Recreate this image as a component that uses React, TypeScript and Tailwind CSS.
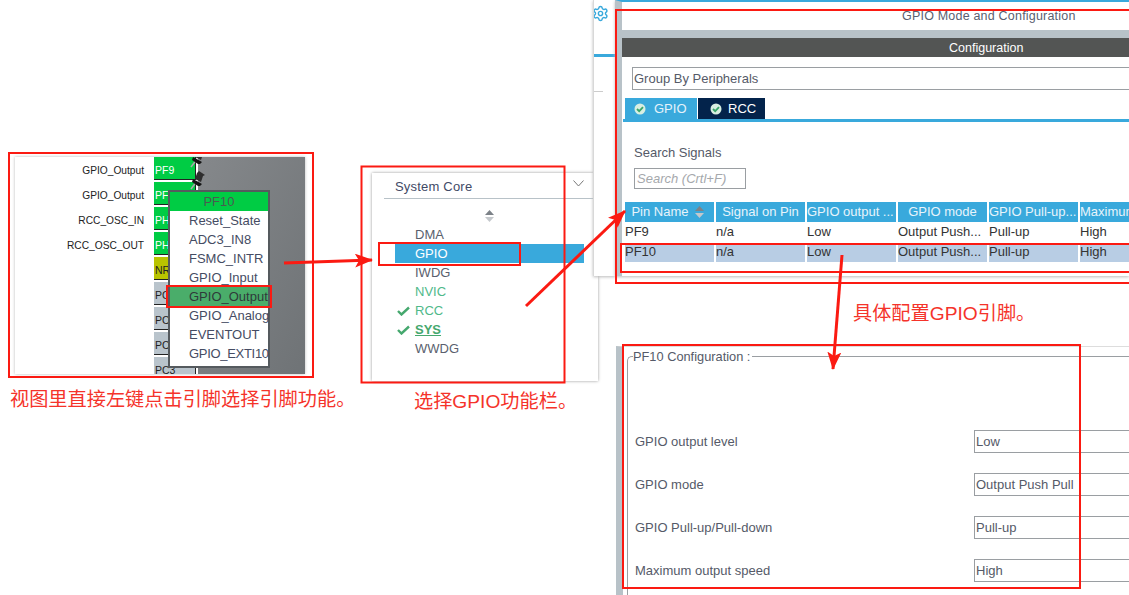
import { Settings } from "lucide-react";

const leftLabels = ["GPIO_Output", "GPIO_Output", "RCC_OSC_IN", "RCC_OSC_OUT"];

const pins = [
  { name: "PF9", bg: "bg-[#00cc44]", text: "text-white" },
  { name: "PF", bg: "bg-[#00cc44]", text: "text-white" },
  { name: "PH", bg: "bg-[#00cc44]", text: "text-white" },
  { name: "PH", bg: "bg-[#00cc44]", text: "text-white" },
  { name: "NR", bg: "bg-[#b9c400]", text: "text-[#222]" },
  { name: "PC", bg: "bg-[#b9c4cc]", text: "text-[#222]" },
  { name: "PC", bg: "bg-[#b9c4cc]", text: "text-[#222]" },
  { name: "PC", bg: "bg-[#b9c4cc]", text: "text-[#222]" },
  { name: "PC3", bg: "bg-[#b9c4cc]", text: "text-[#222]" },
];

const menuItems = ["Reset_State", "ADC3_IN8", "FSMC_INTR", "GPIO_Input", "GPIO_Output", "GPIO_Analog", "EVENTOUT", "GPIO_EXTI10"];

const peripherals = [
  { name: "DMA", cls: "text-[#5a5f6e]" },
  { name: "GPIO", cls: "text-white", active: true },
  { name: "IWDG", cls: "text-[#5a5f6e]" },
  { name: "NVIC", cls: "text-[#4fb98a]" },
  { name: "RCC", cls: "text-[#4fb98a]", check: true },
  { name: "SYS", cls: "text-[#45a86e] font-bold underline", check: true },
  { name: "WWDG", cls: "text-[#5a5f6e]" },
];

const columns = [
  { label: "Pin Name", center: true, sort: true },
  { label: "Signal on Pin", center: true },
  { label: "GPIO output ..." },
  { label: "GPIO mode", center: true },
  { label: "GPIO Pull-up..." },
  { label: "Maximum" },
];

const rows = [
  { cells: ["PF9", "n/a", "Low", "Output Push...", "Pull-up", "High"], bg: "bg-white" },
  { cells: ["PF10", "n/a", "Low", "Output Push...", "Pull-up", "High"], bg: "bg-[#b8cde4]" },
];

const configRows = [
  { label: "GPIO output level", value: "Low" },
  { label: "GPIO mode", value: "Output Push Pull" },
  { label: "GPIO Pull-up/Pull-down", value: "Pull-up" },
  { label: "Maximum output speed", value: "High" },
];

function CheckIcon() {
  return (
    <svg className="h-[10px] w-[13px]" viewBox="0 0 13 10" fill="none" stroke="#45a86e" strokeWidth={2.4}>
      <path d="M1 5l3.500 3.500L12 1.500" />
    </svg>
  );
}

function TabIcon() {
  return (
    <svg className="h-[12px] w-[12px]" viewBox="0 0 12 12">
      <circle cx="6" cy="6" r="5.500" fill="#d8efe2" />
      <path d="M3 6l2.200 2.200L9 4.200" fill="none" stroke="#3aa66a" strokeWidth={1.8} />
    </svg>
  );
}

function PushPin({ className }: { className: string }) {
  return (
    <svg className={className} viewBox="0 0 16 20">
      <path d="M1 19L7 11" stroke="#a8a8a8" strokeWidth={1.5} />
      <path d="M5 9l2-6 2-2 6 4-2 1-2 6z" fill="#2e2e2e" />
      <path d="M3 9l9 5-2 2-2 0-6-4z" fill="#141414" />
    </svg>
  );
}

function SortIcon() {
  return (
    <svg className="h-[12px] w-[9px]" viewBox="0 0 9 12">
      <path d="M4.500 0L9 5H0z" fill="#7c8288" />
      <path d="M4.500 12L0 7h9z" fill="#c4c8cc" />
    </svg>
  );
}

function PinoutView() {
  return (
    <div className="absolute left-[15px] top-[157px] flex h-[217px] w-[290px] overflow-hidden bg-white shadow-[0_0_3px_#bbb]">
      <div className="w-[139px] flex-none pr-[10px] pt-[6px] text-right text-[10.200px] text-[#222]">
        {leftLabels.map((label, i) => (
          <div key={i} className="h-[25px] leading-[16px]">{label}</div>
        ))}
      </div>
      <div className="w-[44px] flex-none border-r-2 border-white">
        {pins.map((pin, i) => (
          <div key={i} className={`mb-[2px] h-[23px] overflow-hidden border-r border-b border-[#222] pl-[1px] text-[10.500px] leading-[27px] ${pin.bg} ${pin.text}`}>
            {pin.name}
          </div>
        ))}
      </div>
      <div className="flex-1 bg-gradient-to-br from-[#85888b] to-[#6f7376]" />
      <PushPin className="absolute left-[175px] -top-[9px] h-[20px] w-[16px]" />
      <PushPin className="absolute left-[175px] top-[13px] h-[20px] w-[16px]" />
    </div>
  );
}

function PinMenu() {
  return (
    <div className="absolute left-[168px] top-[190px] w-[102px] border-2 border-[#555a5e] bg-white text-[13px] text-[#454c63]">
      <div className="h-[19px] bg-[#00cc44] text-center leading-[20px] text-[#4a5a50]">PF10</div>
      <div className="pb-[3px]">
        {menuItems.map((item) => (
          <div
            key={item}
            className={`h-[19px] whitespace-nowrap pl-[19px] leading-[19px] ${item === "GPIO_Output" ? "bg-[#4aad6a] text-[#2f3a3a]" : ""} ${item === "GPIO_EXTI10" ? "tracking-[-0.3px]" : ""}`}
          >
            {item}
          </div>
        ))}
      </div>
    </div>
  );
}

function SystemCore() {
  return (
    <div className="absolute left-[372px] top-[173px] h-[208px] w-[226px] bg-white text-[13px] shadow-[0_0_3px_#999]">
      <div className="ml-[12px] flex h-[26px] items-center justify-between border-b border-[#b8c2c8] pt-[2px] pr-[14px] pl-[11px] text-[#3f4a66]">
        <span className="tracking-[0.2px]">System Core</span>
        <svg className="mb-[6px] h-[7px] w-[11px]" viewBox="0 0 11 7" fill="none" stroke="#777" strokeWidth={1}>
          <path d="M0.500 0.500L5.500 6l5-5.500" />
        </svg>
      </div>
      <div className="mt-[11px] flex justify-center pl-[8px]"><SortIcon /></div>
      <div className="mt-[3px] mr-[14px] ml-[23px]">
        {peripherals.map((p) => (
          <div key={p.name} className={`flex h-[19px] items-center ${p.active ? "bg-[#39a9dc]" : ""}`}>
            <span className="flex w-[20px] flex-none justify-start pl-[2px]">{p.check && <CheckIcon />}</span>
            <span className={p.cls}>{p.name}</span>
          </div>
        ))}
      </div>
    </div>
  );
}

function SidePanel() {
  return (
    <div className="absolute left-[593px] top-0 h-[276px] w-[22px] overflow-hidden border-l border-[#d8d8d8] bg-white shadow-[0_1px_3px_#bbb]">
      <Settings className="mt-[5px] -ml-[2px] h-[17px] w-[17px] text-[#39a9dc]" />
      <div className="mt-[32px] h-[3px] bg-[#39a9dc]" />
      <div className="mt-[34px] mr-[12px] h-px bg-[#ccc]" />
    </div>
  );
}

function GpioConfig() {
  return (
    <div className="absolute top-0 left-[615px] h-[276px] w-[514px] border-t-2 border-l-[7px] border-[#39a9dc] border-l-[#b8c2c8] bg-[#b8c2c8] shadow-[0_1px_3px_#bbb]">
      <div className="h-[28px] bg-white pt-[6px] pl-[280px] text-[12.500px] leading-[16px] tracking-[0.2px] text-[#5a6070]">GPIO Mode and Configuration</div>
      <div className="mt-[8px] h-[238px] bg-white">
        <div className="h-[19px] bg-[#535554] pl-[327px] text-[12.500px] leading-[21px] text-white">Configuration</div>
        <div className="mt-[10px] ml-[10px] h-[23px] border-y border-l border-[#9a9ea2] pl-[1px] text-[13px] leading-[21px] text-[#555a68]">Group By Peripherals</div>
        <div className="mt-[8px] ml-px flex h-[24px] gap-px border-b-[3px] border-[#39a9dc] pl-[2px] text-[13px] text-white">
          <div className="flex w-[72px] items-center gap-[8px] bg-[#39a9dc] pl-[9px]"><TabIcon /><span className="text-[#e4f2fa]">GPIO</span></div>
          <div className="flex w-[67px] items-center gap-[6px] bg-[#03234b] pl-[12px]"><TabIcon /><span>RCC</span></div>
        </div>
        <div className="mt-[23px] ml-[12px] text-[13px] leading-[16px] text-[#555a68]">Search Signals</div>
        <div className="mt-[7px] ml-[12px] h-[21px] w-[112px] border border-[#9a9ea2] pl-[2px] text-[13px] leading-[19px] text-[#a5a8ac] italic">Search (Crtl+F)</div>
        <div className="mt-[13px] ml-[3px] w-[540px]">
          <div className="flex h-[20px] gap-[2px]">
            {columns.map((c) => (
              <div key={c.label} className={`flex w-[89px] flex-none items-center gap-[6px] overflow-hidden bg-[#39a9dc] text-[13px] whitespace-nowrap text-[#e8f4fb] ${c.center ? "justify-center" : ""} ${c.sort ? "pr-[4px]" : ""}`}>
                {c.label}
                {c.sort && <SortIcon />}
              </div>
            ))}
          </div>
          {rows.map((row, r) => (
            <div key={r} className="mt-[1px] flex h-[19px] gap-[2px]">
              {row.cells.map((cell, i) => (
                <div key={i} className={`w-[89px] flex-none overflow-hidden text-[13px] leading-[18px] whitespace-nowrap text-[#333] ${row.bg}`}>{cell}</div>
              ))}
            </div>
          ))}
        </div>
      </div>
    </div>
  );
}

function PinConfig() {
  return (
    <div className="absolute top-[346px] left-[616px] h-[249px] w-[513px] border-t border-l-[7px] border-t-[#ddd] border-l-[#b8c2c8] bg-white">
      <div className="relative mt-[9px] ml-[4px] h-[240px] rounded-tl-[5px] border-t border-l border-[#9a9ea2]">
        <span className="absolute -top-[8px] left-[5px] bg-white pr-[2px] text-[12.800px] leading-[16px] text-[#555a68]">PF10 Configuration :</span>
        <div className="mt-[73px] flex flex-col gap-[20px] pl-[7px]">
          {configRows.map((row) => (
            <div key={row.label} className="flex h-[23px] items-center justify-between text-[13px] text-[#555a68]">
              <span>{row.label}</span>
              <div className="h-[23px] w-[155px] flex-none border border-r-0 border-[#9a9ea2] pl-px leading-[21px]">{row.value}</div>
            </div>
          ))}
        </div>
      </div>
    </div>
  );
}

function Annotations() {
  const red = "#fb1a12";
  return (
    <svg className="pointer-events-none absolute inset-0 h-[595px] w-[1129px]" viewBox="0 0 1129 595" fill="none">
      <defs>
        <marker id="head" viewBox="0 0 18 14" refX="17" refY="7" markerWidth="18" markerHeight="14" markerUnits="userSpaceOnUse" orient="auto">
          <path d="M0 0L18 7L0 14L4 7z" fill={red} />
        </marker>
      </defs>
      <g stroke={red} strokeWidth={2}>
        <rect x="9" y="153" width="304" height="224" />
        <rect x="167" y="286" width="104" height="21" />
        <rect x="361.500" y="166.500" width="203" height="216" />
        <rect x="379" y="243" width="141" height="22" />
        <rect x="616" y="10" width="520" height="273" />
        <rect x="621" y="244" width="520" height="28" />
        <rect x="623" y="345" width="457" height="243" />
      </g>
      <g stroke={red} strokeWidth={3}>
        <path d="M284 263L372 260" markerEnd="url(#head)" />
        <path d="M526 306L625 211" markerEnd="url(#head)" />
        <path d="M842 255L833 369" markerEnd="url(#head)" />
      </g>
    </svg>
  );
}

function Caption({ className, children }: { className: string; children: string }) {
  return (
    <div className={`absolute whitespace-nowrap text-[19.200px] leading-[24px] text-[#f5332a] ${className}`}>{children}</div>
  );
}

export default function App() {
  return (
    <div
      className="relative h-[595px] w-[1129px] overflow-hidden bg-white"
      style={{ fontFamily: '"Liberation Sans", "Noto Sans CJK SC", sans-serif' }}
    >
      <PinoutView />
      <PinMenu />
      <SystemCore />
      <SidePanel />
      <GpioConfig />
      <PinConfig />
      <Annotations />
      <Caption className="left-[10px] top-[388px]">视图里直接左键点击引脚选择引脚功能。</Caption>
      <Caption className="left-[414px] top-[390px]">选择GPIO功能栏。</Caption>
      <Caption className="left-[853px] top-[302px]">具体配置GPIO引脚。</Caption>
    </div>
  );
}
